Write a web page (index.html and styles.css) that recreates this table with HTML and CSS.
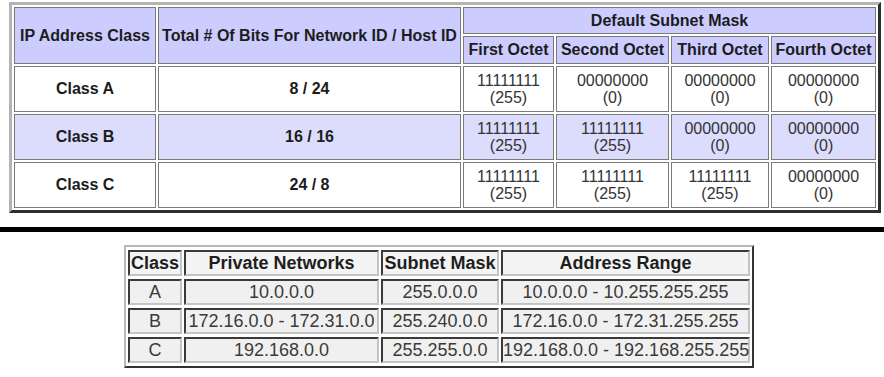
FILE: index.html
```html
<!DOCTYPE html>
<html>
<head>
<meta charset="utf-8">
<link rel="stylesheet" href="styles.css">
</head>
<body>
<table class="classes">
  <colgroup>
    <col class="c-class"><col class="c-bits"><col class="c-o1"><col class="c-o2"><col class="c-o3"><col class="c-o4">
  </colgroup>
  <tr class="h1">
    <th rowspan="2">IP Address Class</th>
    <th rowspan="2">Total # Of Bits For Network ID / Host ID</th>
    <th colspan="4">Default Subnet Mask</th>
  </tr>
  <tr class="h2">
    <th>First Octet</th><th>Second Octet</th><th>Third Octet</th><th>Fourth Octet</th>
  </tr>
  <tr class="row">
    <th>Class A</th><th>8 / 24</th>
    <td>11111111<br>(255)</td><td>00000000<br>(0)</td><td>00000000<br>(0)</td><td>00000000<br>(0)</td>
  </tr>
  <tr class="row alt">
    <th>Class B</th><th>16 / 16</th>
    <td>11111111<br>(255)</td><td>11111111<br>(255)</td><td>00000000<br>(0)</td><td>00000000<br>(0)</td>
  </tr>
  <tr class="row last">
    <th>Class C</th><th>24 / 8</th>
    <td>11111111<br>(255)</td><td>11111111<br>(255)</td><td>11111111<br>(255)</td><td>00000000<br>(0)</td>
  </tr>
</table>
<div class="rule"></div>
<table class="private">
  <colgroup>
    <col class="p-class"><col class="p-net"><col class="p-mask"><col class="p-range">
  </colgroup>
  <tr class="ph">
    <th>Class</th><th>Private Networks</th><th>Subnet Mask</th><th>Address Range</th>
  </tr>
  <tr>
    <td>A</td><td>10.0.0.0</td><td>255.0.0.0</td><td>10.0.0.0 - 10.255.255.255</td>
  </tr>
  <tr>
    <td>B</td><td>172.16.0.0 - 172.31.0.0</td><td>255.240.0.0</td><td>172.16.0.0 - 172.31.255.255</td>
  </tr>
  <tr>
    <td>C</td><td>192.168.0.0</td><td>255.255.0.0</td><td>192.168.0.0 - 192.168.255.255</td>
  </tr>
</table>
</body>
</html>
```

FILE: styles.css
```css
html, body {
  margin: 0;
  padding: 0;
  background: #ffffff;
}

body {
  font-family: "Liberation Sans", Arial, sans-serif;
  width: 884px;
  height: 377px;
  overflow: hidden;
}

/* ---------- top table ---------- */
.classes {
  margin: 2px 0 0 9px;
  width: 872px;
  table-layout: fixed;
  border-collapse: separate;
  border-spacing: 2px;
  border-style: solid;
  border-width: 3px 3px 3px 3px;
  border-color: #b4b4b4 #2e2e2e #2e2e2e #b4b4b4;
}

.c-class { width: 142px; }
.c-bits { width: 303px; }
.c-o1 { width: 91px; }
.c-o2 { width: 113px; }
.c-o3 { width: 98px; }
.c-o4 { width: 105px; }

.classes th,
.classes td {
  border: 1px solid #7a7a7a;
  padding: 0;
  text-align: center;
  vertical-align: middle;
  white-space: nowrap;
}

.classes th {
  font-size: 16px;
  font-weight: bold;
  color: #1c1c1c;
}

.classes td {
  font-size: 16px;
  line-height: 17px;
  color: #333333;
}

.classes .h1 th,
.classes .h2 th {
  background: #ccccff;
}

.classes .h1 { height: 27px; }
.classes .h2 { height: 28px; }
.classes .row { height: 46px; }
.classes .row.last { height: 46px; }

.classes .alt th,
.classes .alt td {
  background: #dcdcfd;
}

/* ---------- divider ---------- */
.rule {
  margin-top: 14px;
  height: 5px;
  background: #000000;
}

/* ---------- bottom table ---------- */
.private {
  margin: 13px 0 0 124px;
  width: 630px;
  table-layout: fixed;
  border-collapse: separate;
  border-spacing: 2px 3px;
  border-style: solid;
  border-width: 2px;
  border-color: #b8b8b8 #333333 #333333 #b8b8b8;
}

.p-class { width: 54px; }
.p-net { width: 195px; }
.p-mask { width: 118px; }
.p-range { width: 249px; }

.private th,
.private td {
  height: 26px;
  padding: 0;
  border-style: solid;
  border-width: 2px;
  border-color: #3a3a3a #c4c4c4 #c4c4c4 #3a3a3a;
  background: #f0f0f0;
  text-align: center;
  vertical-align: middle;
  white-space: nowrap;
  font-size: 18px;
  box-sizing: border-box;
}

.private th {
  font-weight: bold;
  color: #1e1e1e;
  background: #f4f4f4;
}

.private td {
  color: #3a3a3a;
}
```
